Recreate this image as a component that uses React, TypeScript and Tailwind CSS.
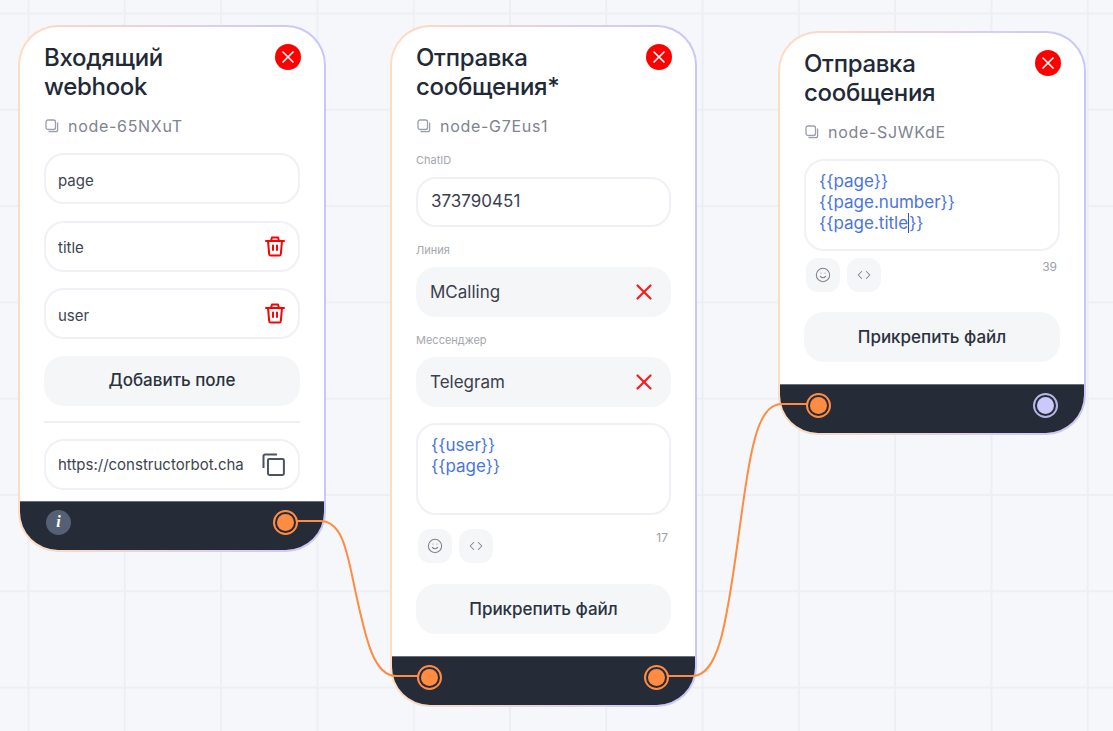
import { Code, Smile, X } from 'lucide-react';
import type { ReactNode } from 'react';

function Handle({ tone = 'orange' }: { tone?: 'orange' | 'purple' }) {
  const purple = tone === 'purple';
  return (
    <div
      className={`w-[25px] h-[25px] rounded-full border-2 flex items-center justify-center ${
        purple ? 'border-[#b8b5e6]' : 'border-[#ff8c42]'
      }`}
    >
      <div className={`w-[17px] h-[17px] rounded-full ${purple ? 'bg-[#cbc8fa]' : 'bg-[#ff8c42]'}`} />
    </div>
  );
}

function CopySmall() {
  return (
    <svg width="14" height="14" viewBox="0 0 14 14" fill="none" stroke="#9a9ea8" strokeWidth="1.3">
      <rect x="1" y="1" width="9.5" height="9.5" rx="2" />
      <path d="M12.6 3.5v7.2a2 2 0 0 1-2 2H3.5" />
    </svg>
  );
}

function CopyLarge() {
  return (
    <svg width="24" height="24" viewBox="0 0 24 24" fill="none" stroke="#4b5260" strokeWidth="2">
      <rect x="6" y="6" width="16" height="16" rx="1.5" />
      <path d="M1.5 15V3a1.5 1.5 0 0 1 1.5-1.5h12" />
    </svg>
  );
}

function TrashIcon() {
  return (
    <svg width="20" height="21" viewBox="0 0 20 21" fill="none" stroke="#ff0000" strokeWidth="2" strokeLinecap="round" strokeLinejoin="round">
      <path d="M1 5h18" />
      <path d="M6 5l1-3.6h6L14 5" />
      <path d="M3 5l1.2 13.2a1.6 1.6 0 0 0 1.6 1.4h8.4a1.6 1.6 0 0 0 1.6-1.4L17 5" />
      <path d="M8 9.5v4.5M12 9.5v4.5" />
    </svg>
  );
}

function Header({ title, id }: { title: ReactNode; id: string }) {
  return (
    <>
      <div className="flex justify-between items-start">
        <h3 className="text-[24px] leading-[29px] font-medium tracking-[-0.3px] text-[#222936]">{title}</h3>
        <button className="w-[26px] h-[26px] mt-[1px] -mr-[1px] rounded-full bg-[#ff0000] flex items-center justify-center">
          <X className="w-5 h-5 text-white" strokeWidth={2} />
        </button>
      </div>
      <div className="flex items-center gap-[9px] h-6 mt-[13px] ml-[1px] text-[#80848e] text-[16px]">
        <CopySmall />
        <span className="tracking-[0.7px]">{id}</span>
      </div>
    </>
  );
}

function Field({ text, trash }: { text: string; trash?: boolean }) {
  return (
    <div className="h-[51px] rounded-[20px] border-2 border-[#f0f0f6] pl-[12px] pr-[13px] flex items-center justify-between text-[15px] text-[#3e4452]">
      <span className="pt-[5px]">{text}</span>
      {trash && <TrashIcon />}
    </div>
  );
}

function Label({ text }: { text: string }) {
  return <div className="h-[14px] mb-[10px] mt-[16px] text-[11px] leading-[14px] text-[#a3a6ae]">{text}</div>;
}

function SelectField({ text }: { text: string }) {
  return (
    <div className="h-[50px] rounded-[20px] bg-[#f5f6f8] pl-[14px] pr-[14px] flex items-center justify-between text-[17px] text-[#3a404d]">
      <span className="pt-[2px]">{text}</span>
      <X className="w-[26px] h-[26px] text-[#ff1a1a]" strokeWidth={2} />
    </div>
  );
}

function Wide({ text }: { text: string }) {
  return (
    <button className="h-[50px] w-full pt-[1px] rounded-[20px] bg-[#f5f6f8] text-[17px] font-medium text-[#2b3240]">{text}</button>
  );
}

function Editor({ lines }: { lines: ReactNode[] }) {
  return (
    <div className="h-[92px] rounded-[20px] border-2 border-[#f0f0f6] px-[13px] pt-[10px] text-[17px] leading-[21px] text-[#4a74e0]">
      {lines.map((l, i) => (
        <div key={i}>{l}</div>
      ))}
    </div>
  );
}

function Tools({ count, mt }: { count: number; mt: string }) {
  return (
    <div className={`flex justify-between ${mt} ml-[2px]`}>
      <div className="flex gap-[7px]">
        <div className="w-[34px] h-[34px] rounded-xl bg-[#f5f6f8] flex items-center justify-center">
          <Smile className="w-[16px] h-[16px] text-[#80848e]" strokeWidth={1.6} />
        </div>
        <div className="w-[34px] h-[34px] rounded-xl bg-[#f5f6f8] flex items-center justify-center">
          <Code className="w-[14px] h-[14px] text-[#80848e]" strokeWidth={1.8} />
        </div>
      </div>
      <span className="text-[12px] leading-[16px] text-[#9a9ea8] mr-[3px] mt-[1px]">{count}</span>
    </div>
  );
}

function Card({
  x,
  y,
  width = 'w-[308px]',
  gap,
  left,
  right,
  children,
}: {
  x: string;
  y: string;
  width?: string;
  gap: string;
  left?: ReactNode;
  right?: ReactNode;
  children: ReactNode;
}) {
  return (
    <div className={`absolute ${x} ${y} ${width} p-[2px] rounded-[40px] bg-linear-to-r from-[#ffdcc0] to-[#c9c6fb]`}>
      <div className="rounded-[38px] bg-white overflow-hidden">
        <div className={`px-6 pt-4 ${gap}`}>{children}</div>
        <div className="h-[49px] bg-[#252b37] border-t border-[#6d7079] flex items-center justify-between pl-[26px] pr-[26px] pb-2">
          {left}
          {right}
        </div>
      </div>
    </div>
  );
}

export default function App() {
  return (
    <div className="relative w-[1113px] h-[731px] overflow-hidden font-['Inter',sans-serif] bg-[#f6f7fa] bg-[linear-gradient(to_right,#eeeff5_2px,transparent_2px),linear-gradient(to_bottom,#eeeff5_2px,transparent_2px)] bg-[size:96.3px_96.3px] bg-[position:27.5px_12.5px]">
      <Card
        x="left-[18px]"
        y="top-[25px]"
        gap="pb-[11px]"
        left={
          <div className="w-[25px] h-[25px] rounded-full bg-[#566074] flex items-center justify-center text-white italic font-bold text-[16px] font-['Liberation_Serif',serif]">
            i
          </div>
        }
        right={<Handle />}
      >
        <Header
          title={
            <>
              Входящий
              <br />
              webhook
            </>
          }
          id="node-65NXuT"
        />
        <div className="flex flex-col gap-[16.5px] mt-[15px]">
          <Field text="page" />
          <Field text="title" trash />
          <Field text="user" trash />
          <Wide text="Добавить поле" />
        </div>
        <div className="h-[2px] bg-[#f0f0f4] mt-[15.5px] mb-4" />
        <div className="h-[51px] rounded-[20px] border-2 border-[#f0f0f6] pl-[12px] pr-[12px] flex items-center gap-[18px] text-[15px] text-[#3e4452]">
          <span className="w-[187px] pt-[2px] overflow-hidden whitespace-nowrap">https://constructorbot.chat/webhook</span>
          <CopyLarge />
        </div>
      </Card>

      <Card
        x="left-[390px]"
        y="top-[25px]"
        width="w-[307px]"
        gap="pb-[22px]"
        left={
          <div className="-ml-[1px]">
            <Handle />
          </div>
        }
        right={<Handle />}
      >
        <Header
          title={
            <>
              Отправка
              <br />
              сообщения*
            </>
          }
          id="node-G7Eus1"
        />
        <div className="h-[14px] mb-[10px] mt-[15px] text-[11px] leading-[14px] text-[#a3a6ae]">ChatID</div>
        <div className="h-[50px] rounded-[20px] border-2 border-[#f0f0f6] px-[13px] flex items-center text-[17px] text-[#3a404d]">
          373790451
        </div>
        <Label text="Линия" />
        <SelectField text="MCalling" />
        <Label text="Мессенджер" />
        <SelectField text="Telegram" />
        <div className="mt-4">
          <Editor lines={['{{user}}', '{{page}}']} />
        </div>
        <Tools count={17} mt="mt-[14px]" />
        <div className="mt-[21px]">
          <Wide text="Прикрепить файл" />
        </div>
      </Card>

      <Card x="left-[778px]" y="top-[31px]" gap="pb-[22px]" left={<Handle />} right={<Handle tone="purple" />}>
        <Header
          title={
            <>
              Отправка
              <br />
              сообщения
            </>
          }
          id="node-SJWKdE"
        />
        <div className="mt-[15px]">
          <Editor
            lines={[
              '{{page}}',
              '{{page.number}}',
              <>
                {'{{page.title'}
                <span className="border-l border-[#2f55c4]" />
                {'}}'}
              </>,
            ]}
          />
        </div>
        <Tools count={39} mt="mt-[7px]" />
        <div className="mt-[20px]">
          <Wide text="Прикрепить файл" />
        </div>
      </Card>

      {/* edges between the node handles */}
      <svg className="absolute inset-0 pointer-events-none" width="1113" height="731" fill="none" stroke="#ff8c42" strokeWidth="2">
        <path d="M297 521H320C343 521 347 552 356 594C366 640 374 676 396 676H419" />
        <path d="M668 676H692C718 676 726 628 738 540C750 452 756 404 782 404H807" />
      </svg>
    </div>
  );
}
